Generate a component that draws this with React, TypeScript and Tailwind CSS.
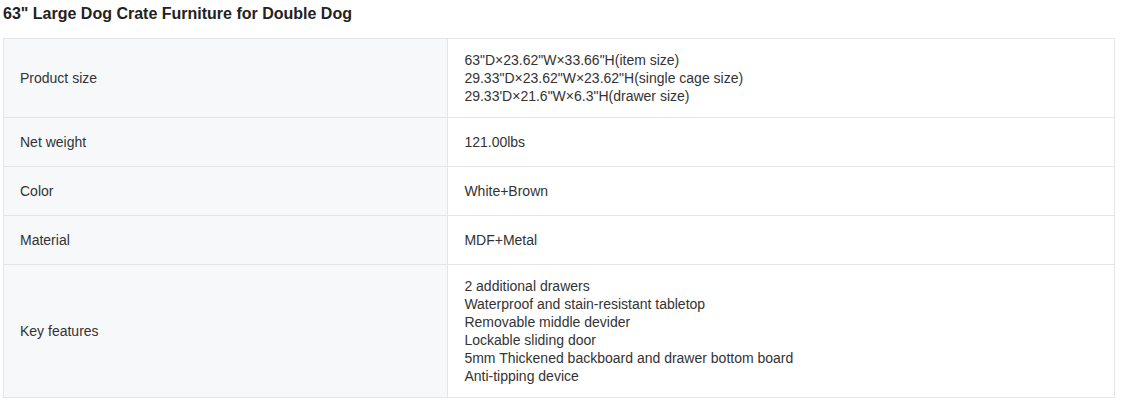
import React from 'react'

const rows: { label: string; lines: string[] }[] = [
  {
    label: 'Product size',
    lines: [
      '63"D×23.62"W×33.66"H(item size)',
      '29.33"D×23.62"W×23.62"H(single cage size)',
      '29.33\'D×21.6"W×6.3"H(drawer size)',
    ],
  },
  { label: 'Net weight', lines: ['121.00lbs'] },
  { label: 'Color', lines: ['White+Brown'] },
  { label: 'Material', lines: ['MDF+Metal'] },
  {
    label: 'Key features',
    lines: [
      '2 additional drawers',
      'Waterproof and stain-resistant tabletop',
      'Removable middle devider',
      'Lockable sliding door',
      '5mm Thickened backboard and drawer bottom board',
      'Anti-tipping device',
    ],
  },
]

export default function App(): React.JSX.Element {
  return (
    <div className="bg-white px-[3px] pt-[2px] text-[#333] font-['Liberation_Sans',Arial,sans-serif]">
      <h2 className="text-base font-bold leading-6 text-[#222] mb-3">63" Large Dog Crate Furniture for Double Dog</h2>
      <table className="w-[1112px] border-collapse text-sm leading-[18px]">
        <tbody>
          {rows.map((r) => (
            <tr key={r.label}>
              <td className="w-[40%] border border-[#e4e5e7] bg-[#f7f8fa] px-4 py-[15px] align-middle">{r.label}</td>
              <td className="border border-[#e4e5e7] px-4 py-3 align-middle">
                {r.lines.map((l) => (
                  <div key={l}>{l}</div>
                ))}
              </td>
            </tr>
          ))}
        </tbody>
      </table>
    </div>
  )
}
